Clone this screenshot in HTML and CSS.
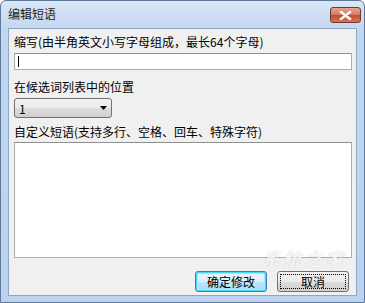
FILE: index.html
```
<!DOCTYPE html>
<html lang="zh">
<head>
<meta charset="utf-8">
<title>编辑短语</title>
<link rel="stylesheet" href="styles.css">
</head>
<body>
<div class="window">
  <div class="titlebar">
    <span class="title">编辑短语</span>
    <span class="close">
      <svg width="13" height="9" viewBox="0 0 13 9"><path d="M2 1 L11 8 M11 1 L2 8" stroke="#fff" stroke-width="2.4" stroke-linecap="square"/></svg>
    </span>
  </div>
  <div class="client">
    <div class="label">缩写(由半角英文小写字母组成，最长64个字母)</div>
    <div class="input"><span class="caret"></span></div>
    <div class="label l2">在候选词列表中的位置</div>
    <div class="combo"><span>1</span><svg width="7" height="4" viewBox="0 0 7 4"><path d="M0 0 H7 L3.5 4 Z" fill="#000"/></svg></div>
    <div class="label l3">自定义短语(支持多行、空格、回车、特殊字符)</div>
    <div class="textarea"></div>
    <div class="buttons">
      <div class="btn default">确定修改</div>
      <div class="btn focus">取消</div>
    </div>
    <div class="watermark">系统之家</div>
  </div>
</div>
</body>
</html>
```
FILE: styles.css
```
html, body {
  margin: 0;
  padding: 0;
  width: 365px;
  height: 303px;
  overflow: hidden;
  background: #fff;
}
.window {
  box-sizing: border-box;
  width: 365px;
  height: 303px;
  border: 1px solid #5d7a9c;
  border-radius: 6px 6px 0 0;
  background: linear-gradient(#d9e6f5, #c2d6ef 30px, #bcd2ee);
  display: flex;
  flex-direction: column;
  padding: 0 7px 6px 7px;
  font-family: "Noto Sans CJK SC", "Liberation Sans", sans-serif;
  font-size: 12px;
  color: #000;
}
.titlebar {
  height: 27px;
  flex: none;
  display: flex;
  align-items: flex-start;
  justify-content: space-between;
}
.title {
  margin-top: 4px;
  line-height: 18px;
  color: #1e1e1e;
}
.close {
  margin-top: 6px;
  margin-right: -4px;
  width: 31px;
  height: 16px;
  box-sizing: border-box;
  border: 1px solid #6b3a34;
  border-radius: 3px;
  background: linear-gradient(#e8a493, #d7765f 50%, #c4482f 51%, #d2775a);
  display: flex;
  align-items: center;
  justify-content: center;
}
.client {
  position: relative;
  flex: 1;
  background: #f0f0f0;
  border: 1px solid #8ea7c4;
  padding: 5px 4px 0 5px;
  display: flex;
  flex-direction: column;
}
.label {
  line-height: 16px;
  height: 16px;
}
.input {
  margin-top: 3px;
  height: 17px;
  box-sizing: border-box;
  border: 1px solid #abadb3;
  border-top-color: #8e8f8f;
  background: #fff;
  padding: 2px 3px;
}
.caret {
  display: block;
  width: 1px;
  height: 11px;
  background: #000;
}
.l2 { margin-top: 9px; }
.combo {
  margin-top: 3px;
  width: 98px;
  height: 20px;
  box-sizing: border-box;
  border: 1px solid #707070;
  border-radius: 3px;
  background: linear-gradient(#f2f2f2, #ebebeb 50%, #dddddd 51%, #cfcfcf);
  display: flex;
  align-items: center;
  justify-content: space-between;
  padding: 0 4px 0 4px;
}
.l3 { margin-top: 6px; }
.textarea {
  margin-top: 2px;
  height: 116px;
  box-sizing: border-box;
  border: 1px solid #abadb3;
  border-top-color: #8e8f8f;
  background: #fff;
}
.buttons {
  margin-top: 13px;
  display: flex;
  justify-content: flex-end;
  gap: 10px;
  padding-right: 3px;
}
.btn {
  width: 72px;
  height: 21px;
  box-sizing: border-box;
  border: 1px solid #707070;
  border-radius: 3px;
  background: linear-gradient(#f2f2f2, #ebebeb 50%, #dddddd 51%, #cfcfcf);
  display: flex;
  align-items: center;
  justify-content: center;
  line-height: 16px;
}
.btn.default {
  border-color: #3c7fb1;
  box-shadow: inset 0 0 0 1px #48d8fb, inset 0 0 0 2px #a6e6f6;
  background: linear-gradient(#eaf6fd, #d9f0fc 50%, #bee6fd 51%, #a7d9f5);
}
.btn.focus {
  outline: 1px dotted #000;
  outline-offset: -4px;
}
.watermark {
  position: absolute;
  right: 10px;
  bottom: 28px;
  font-size: 18px;
  line-height: 18px;
  font-style: italic;
  font-weight: bold;
  color: rgba(255,255,255,0.85);
  letter-spacing: 3px;
  text-shadow: 0 0 1px rgba(140,160,185,0.6);
}
```
